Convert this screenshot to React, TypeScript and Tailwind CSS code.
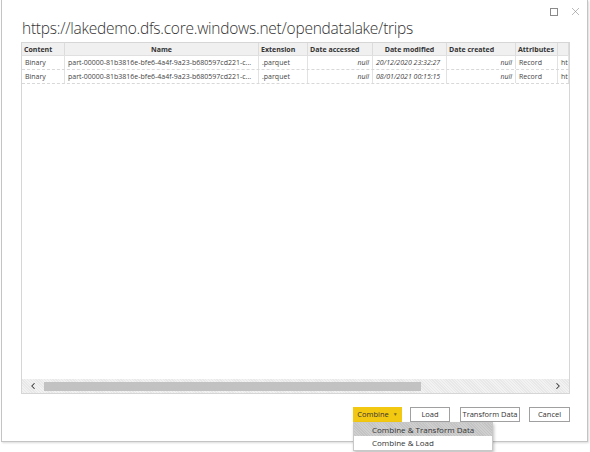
import { ChevronLeft, ChevronRight, X } from 'lucide-react';

const cols = [
  { label: 'Content', w: 'w-[43px]', align: 'text-left' },
  { label: 'Name', w: 'w-[194px]', align: 'text-center' },
  { label: 'Extension', w: 'w-[49px]', align: 'text-left' },
  { label: 'Date accessed', w: 'w-[65px]', align: 'text-left' },
  { label: 'Date modified', w: 'w-[74px]', align: 'text-center' },
  { label: 'Date created', w: 'w-[69px]', align: 'text-left' },
  { label: 'Attributes', w: 'w-[42px]', align: 'text-left' },
  { label: '', w: 'flex-1', align: 'text-left' },
];

const rows = [
  ['Binary', 'part-00000-81b3816e-bfe6-4a4f-9a23-b680597cd221-c...', '.parquet', 'null', '20/12/2020 23:32:27', 'null', 'Record', 'htt'],
  ['Binary', 'part-00000-81b3816e-bfe6-4a4f-9a23-b680597cd221-c...', '.parquet', 'null', '08/01/2021 00:15:15', 'null', 'Record', 'htt'],
];

function Btn({ w, children }: { w: string; children: React.ReactNode }) {
  return (
    <button className={`${w} h-[15px] border border-[#a0a0a0] bg-white text-[7.5px] text-[#333] leading-none flex items-center justify-center`}>
      {children}
    </button>
  );
}

export default function App() {
  return (
    <div className="w-[590px] h-[452px] bg-white" style={{ fontFamily: '"Open Sans", "Noto Sans", sans-serif' }}>
      <div className="ml-[1px] w-[587px] h-[442px] border border-t-0 border-[#c4c4c4] bg-white shadow-[1px_1px_2px_rgba(0,0,0,0.15)] flex flex-col">
        <div className="flex justify-end items-center gap-[11px] pr-[5px] pt-[7px] h-[16px] text-[#8a8a8a]">
          <div className="w-[8px] h-[8px] border border-[#8a8a8a]" />
          <X size={13} strokeWidth={1.1} />
        </div>
        <div className="pl-[20px] h-[26px] pt-[1px] text-[15.5px] font-light leading-[22px] tracking-[-0.25px] text-[#333] whitespace-nowrap">
          https://lakedemo.dfs.core.windows.net/opendatalake/trips
        </div>
        <div className="ml-[19px] w-[549px] h-[352px] border border-[#d6d6d6] flex flex-col">
          <div className="flex h-[13px] bg-[#f0f0f0] border-b border-[#e0e0e0]">
            {cols.map((c, i) => (
              <div key={i} className={`${c.w} ${c.align} shrink-0 border-r border-[#dcdcdc] px-[2px] text-[7px] font-bold leading-[13px] text-[#333] whitespace-nowrap overflow-hidden`}>
                {c.label}
              </div>
            ))}
          </div>
          {rows.map((r, ri) => (
            <div key={ri} className="flex h-[14px] border-b border-dashed border-[#d8d8d8]">
              {r.map((v, i) => {
                const italic = i === 3 || i === 4 || i === 5;
                const right = i === 3 || i === 5;
                return (
                  <div
                    key={i}
                    className={`${cols[i].w} shrink-0 border-r border-[#e2e2e2] px-[3px] text-[7px] leading-[14px] text-[#444] whitespace-nowrap overflow-hidden ${italic ? 'italic' : ''} ${right ? 'text-right' : 'text-left'}`}
                  >
                    {v}
                  </div>
                );
              })}
            </div>
          ))}
          <div className="flex-1" />
          <div className="h-[14px] flex items-center bg-[repeating-linear-gradient(45deg,#f2f2f2_0px,#f2f2f2_1px,#e8e8e8_1px,#e8e8e8_2px)]">
            <div className="w-[22px] flex justify-center text-[#333]">
              <ChevronLeft size={10} strokeWidth={2.5} />
            </div>
            <div className="w-[377px] h-[9px] bg-[#c2c2c2]" />
            <div className="flex-1" />
            <div className="w-[22px] flex justify-center text-[#333]">
              <ChevronRight size={10} strokeWidth={2.5} />
            </div>
          </div>
        </div>
        <div className="mt-[13px] mr-[17px] flex justify-end">
          <div className="relative">
            <button className="h-[15px] w-[49px] bg-[#f2c811] text-[7.5px] text-[#333] leading-none flex items-center justify-center gap-[4px]">
              Combine
              <span className="text-[5px] text-[#7a6a20]">▼</span>
            </button>
            <div className="absolute left-0 top-[15px] w-[140px] bg-white border border-[#c8c8c8] shadow-[1px_2px_3px_rgba(0,0,0,0.25)] z-10">
              <div className="h-[13px] pl-[18px] text-[8px] leading-[13px] text-[#333] bg-[repeating-linear-gradient(45deg,#cfcfcf_0px,#cfcfcf_1px,#c3c3c3_1px,#c3c3c3_2px)]">
                Combine &amp; Transform Data
              </div>
              <div className="h-[14px] pl-[18px] text-[8px] leading-[14px] text-[#333]">
                Combine &amp; Load
              </div>
            </div>
          </div>
          <div className="ml-[8px]"><Btn w="w-[40px]">Load</Btn></div>
          <div className="ml-[10px]"><Btn w="w-[60px]">Transform Data</Btn></div>
          <div className="ml-[9px]"><Btn w="w-[41px]">Cancel</Btn></div>
        </div>
      </div>
    </div>
  );
}
